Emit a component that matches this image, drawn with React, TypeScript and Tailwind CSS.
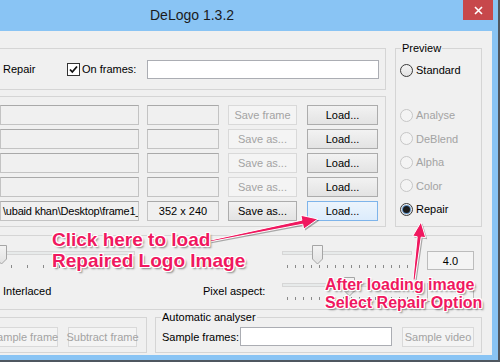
import React from 'react';

// Windows 8 style DeLogo dialog with two pink annotations on top

const BTN = 'flex items-center justify-center h-[20px] border border-[#acacac] bg-linear-to-b from-[#f2f2f2] to-[#e3e3e3] shrink-0';
const BTN_OFF = 'flex items-center justify-center h-[20px] border border-[#d9d9d9] bg-[#f4f4f4] text-[#a3a3a3] shrink-0 whitespace-nowrap';
const BTN_HOVER = 'flex items-center justify-center h-[20px] border border-[#7eb4ea] bg-linear-to-b from-[#ecf4fc] to-[#dcecfc] shrink-0';
const BOX = 'h-[20px] border border-[#c3c3c3] border-t-[#a9a9a9] bg-[#f0f0f0] shrink-0';

const OUTLINE =
  '[text-shadow:-1px_-1px_0_#fff,1px_-1px_0_#fff,-1px_1px_0_#fff,1px_1px_0_#fff,0_-1px_0_#fff,0_1px_0_#fff,-1px_0_0_#fff,1px_0_0_#fff,2px_2px_2px_rgba(0,0,0,0.45)]';

function Slider({ className, thumb, ticks }: { className: string; thumb: number; ticks: number[] }) {
  return (
    <div className={`relative h-[27px] shrink-0 ${className}`}>
      <div className="absolute left-0 right-0 top-[8px] h-[4px] bg-[#e7eaea] border border-[#d6d6d6]" />
      {ticks.map((t) => (
        <div key={t} className="absolute top-[22px] w-px h-[3px] bg-[#8a8a8a]" style={{ left: t }} />
      ))}
      <svg className="absolute top-[2px]" style={{ left: thumb }} width="11" height="20" viewBox="0 0 11 20">
        <defs>
          <linearGradient id="thg" x1="0" y1="0" x2="0" y2="1">
            <stop offset="0" stopColor="#f3f3f3" />
            <stop offset="1" stopColor="#e2e2e2" />
          </linearGradient>
        </defs>
        <polygon points="0.5,0.5 10.5,0.5 10.5,14 5.5,19 0.5,14" fill="url(#thg)" stroke="#a5a5a5" />
      </svg>
    </div>
  );
}

function Radio({ label, state }: { label: string; state: 'on' | 'off' | 'disabled' }) {
  return (
    <div className="flex items-center h-[16px]">
      {state === 'disabled' ? (
        <div className="w-[13px] h-[13px] rounded-full border border-[#c6c6c6] bg-[#f4f4f4]" />
      ) : (
        <div className="w-[13px] h-[13px] rounded-full border border-[#3a3a3a] bg-linear-to-b from-[#f4f4f4] to-[#e2e2e2] flex items-center justify-center">
          {state === 'on' && <div className="w-[7px] h-[7px] rounded-full bg-[#1c1c1c] ring-1 ring-[#5c8fc4]" />}
        </div>
      )}
      <span className={`ml-[3px] ${state === 'disabled' ? 'text-[#a3a3a3]' : ''}`}>{label}</span>
    </div>
  );
}

const rows = [
  { file: '', size: '', save: 'Save frame', on: false },
  { file: '', size: '', save: 'Save as...', on: false },
  { file: '', size: '', save: 'Save as...', on: false },
  { file: '', size: '', save: 'Save as...', on: false },
  { file: '\\ubaid khan\\Desktop\\frame1_', size: '352 x 240', save: 'Save as...', on: true },
];

const rightTicks = Array.from({ length: 16 }, (_, i) => 5 + i * 8);
const leftTicks = Array.from({ length: 8 }, (_, i) => 11 + i * 16);

export default function App() {
  return (
    <div className="relative w-[504px] h-[364px] overflow-hidden bg-white font-['Liberation_Sans',Arial,sans-serif] text-[11px] leading-[14px] text-black">
      <div className="flex flex-col w-[500px] h-[362px] bg-[#89c4f4] border-r-2 border-b-2 border-[#4f5760]">
        {/* title bar */}
        <div className="flex items-start h-[31px] shrink-0">
          <span className="ml-[150px] mt-[7px] text-[14px] leading-[17px] text-[#1b1b1b]">DeLogo 1.3.2</span>
          <div className="ml-auto mr-[5px] w-[30px] h-[20px] bg-[#c7484b] flex items-center justify-center">
            <svg width="9" height="9" viewBox="0 0 9 9">
              <path d="M1 1 L8 8 M8 1 L1 8" stroke="#fff" strokeWidth="1.6" />
            </svg>
          </div>
        </div>

        {/* client area */}
        <div className="w-[492px] h-[324px] bg-[#f0f0f0] pt-[17px] overflow-hidden">
          <div className="flex">
            <div className="flex flex-col w-[386px]">
              <div className="flex items-center h-[42px] border-y border-r border-[#d5d5d5]">
                <span className="ml-[3px] w-[64px]">Repair</span>
                <div className="w-[13px] h-[13px] border border-[#333] bg-white flex items-center justify-center">
                  <svg width="11" height="11" viewBox="0 0 11 11">
                    <path d="M2 5.5 L4.3 8 L9 2.5" fill="none" stroke="#111" strokeWidth="1.8" />
                  </svg>
                </div>
                <span className="ml-[2px]">On frames:</span>
                <div className="ml-auto mr-[6px] w-[232px] h-[19px] bg-white border border-[#abadb3]" />
              </div>

              <div className="mt-[6px] h-[131px] border-y border-r border-[#d5d5d5] pt-[8px] flex flex-col gap-[4px]">
                {rows.map((r, i) => (
                  <div key={i} className="flex h-[20px]">
                    <div className={`${BOX} w-[139px] flex items-center pl-[2px] whitespace-nowrap overflow-hidden tracking-[-0.2px]`}>{r.file}</div>
                    <div className={`${BOX} ml-[8px] w-[72px] flex items-center justify-center`}>{r.size}</div>
                    <div className={`${r.on ? BTN : BTN_OFF} ml-[9px] w-[69px]`}>{r.save}</div>
                    <div className={`${r.on ? BTN_HOVER : BTN} ml-[10px] w-[71px]`}>Load...</div>
                  </div>
                ))}
              </div>
            </div>

            <div className="relative ml-[9px] w-[87px] h-[179px] border border-[#d5d5d5] pt-[13px] pl-[4px]">
              <span className="absolute -top-[8px] left-[5px] px-[1px] bg-[#f0f0f0]">Preview</span>
              <Radio label="Standard" state="off" />
              <div className="mt-[29px] flex flex-col gap-[7.5px]">
                <Radio label="Analyse" state="disabled" />
                <Radio label="DeBlend" state="disabled" />
                <Radio label="Alpha" state="disabled" />
                <Radio label="Color" state="disabled" />
                <Radio label="Repair" state="on" />
              </div>
            </div>
          </div>

          {/* sliders */}
          <div className="mt-[8px] w-[482px] h-[75px] border-y border-r border-[#d5d5d5] pt-[7px]">
            <div className="flex h-[27px]">
              <Slider className="w-[135px]" thumb={-4} ticks={leftTicks} />
              <Slider className="ml-[147px] w-[130px]" thumb={30} ticks={rightTicks} />
              <div className="ml-[15px] mt-[8px] w-[47px] h-[19px] border border-[#bcbcbc] bg-[#f4f4f4] flex items-center justify-center">4.0</div>
            </div>
            <div className="flex h-[28px] mt-[5px]">
              <span className="w-[203px] pl-[3px] mt-[9px]">Interlaced</span>
              <span className="w-[79px] mt-[9px]">Pixel aspect:</span>
              <Slider className="w-[130px]" thumb={62} ticks={rightTicks} />
              <div className="ml-[15px] mt-[8px] w-[47px] h-[19px] border border-[#bcbcbc] bg-[#f4f4f4]" />
            </div>
          </div>

          {/* bottom groups */}
          <div className="flex mt-[7px]">
            <div className="w-[147px] h-[36px] border-y border-r border-[#d5d5d5] flex items-start pt-[9px]">
              <div className={`${BTN_OFF} -ml-[10px] w-[68px]`}>Sample frame</div>
              <div className={`${BTN_OFF} ml-[10px] w-[69px]`}>Subtract frame</div>
            </div>
            <div className="relative ml-[8px] w-[327px] h-[36px] border border-[#d5d5d5] flex items-start pt-[9px] pl-[6px]">
              <span className="absolute -top-[8px] left-[5px] px-[1px] bg-[#f0f0f0]">Automatic analyser</span>
              <span className="w-[78px] mt-[3px]">Sample frames:</span>
              <div className="w-[152px] h-[19px] bg-white border border-[#abadb3]" />
              <div className={`${BTN_OFF} ml-[10px] w-[72px]`}>Sample video</div>
            </div>
          </div>
        </div>
      </div>

      {/* annotations */}
      <svg className="absolute left-0 top-0 pointer-events-none" width="504" height="364">
        <g transform="translate(1.5,1.5)" fill="rgba(0,0,0,0.3)">
          <polygon points="210,240.2 301.9,220.2 300.9,215.3 318,219 303.7,229.1 302.7,224.2 210,241.8" />
          <polygon points="413,279.9 417.2,236.7 412.7,236.1 421,222 425.7,237.7 421.2,237.1 415,280.1" />
        </g>
        <g fill="#f0185f" stroke="#fff" strokeWidth="1" strokeLinejoin="round">
          <polygon points="210,240.2 301.9,220.2 300.9,215.3 318,219 303.7,229.1 302.7,224.2 210,241.8" />
          <polygon points="413,279.9 417.2,236.7 412.7,236.1 421,222 425.7,237.7 421.2,237.1 415,280.1" />
        </g>
      </svg>
      <div className={`absolute left-[52px] top-[229px] text-[19px] leading-[21px] font-bold text-[#f0185f] whitespace-nowrap ${OUTLINE}`}>
        Click here to load
        <br />
        Repaired Logo Image
      </div>
      <div className={`absolute left-[325px] top-[276px] text-[16px] leading-[18px] font-bold text-[#f0185f] whitespace-nowrap ${OUTLINE}`}>
        After loading image
        <br />
        Select Repair Option
      </div>
    </div>
  );
}
